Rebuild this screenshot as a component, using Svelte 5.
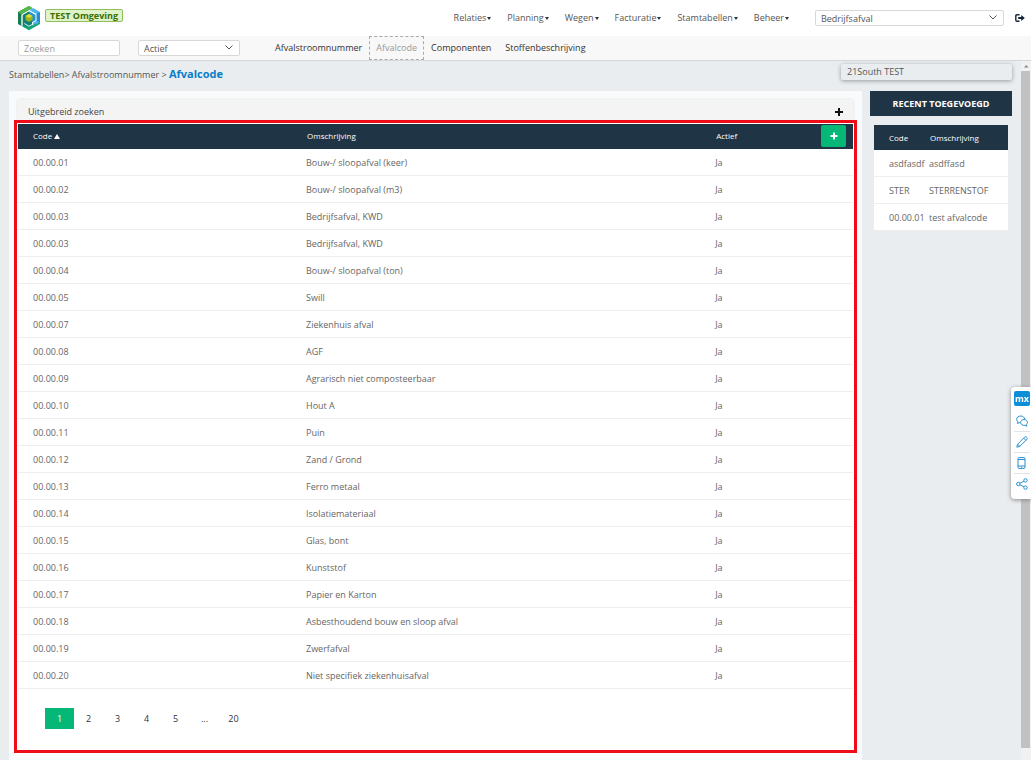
<script>
  const menu = ['Relaties', 'Planning', 'Wegen', 'Facturatie', 'Stamtabellen', 'Beheer'];
  const tabs = ['Afvalstroomnummer', 'Afvalcode', 'Componenten', 'Stoffenbeschrijving'];
  const rows = [
    ['00.00.01', 'Bouw-/ sloopafval (keer)'],
    ['00.00.02', 'Bouw-/ sloopafval (m3)'],
    ['00.00.03', 'Bedrijfsafval, KWD'],
    ['00.00.03', 'Bedrijfsafval, KWD'],
    ['00.00.04', 'Bouw-/ sloopafval (ton)'],
    ['00.00.05', 'Swill'],
    ['00.00.07', 'Ziekenhuis afval'],
    ['00.00.08', 'AGF'],
    ['00.00.09', 'Agrarisch niet composteerbaar'],
    ['00.00.10', 'Hout A'],
    ['00.00.11', 'Puin'],
    ['00.00.12', 'Zand / Grond'],
    ['00.00.13', 'Ferro metaal'],
    ['00.00.14', 'Isolatiemateriaal'],
    ['00.00.15', 'Glas, bont'],
    ['00.00.16', 'Kunststof'],
    ['00.00.17', 'Papier en Karton'],
    ['00.00.18', 'Asbesthoudend bouw en sloop afval'],
    ['00.00.19', 'Zwerfafval'],
    ['00.00.20', 'Niet specifiek ziekenhuisafval']
  ];
  const recent = [
    ['asdfasdf', 'asdffasd'],
    ['STER', 'STERRENSTOF'],
    ['00.00.01', 'test afvalcode']
  ];
  const pages = ['1', '2', '3', '4', '5', '...', '20'];
  let page = $state('1');
</script>

<div class="page">
  <header class="top">
    <svg class="logo" viewBox="0 0 24 26" aria-hidden="true">
      <path d="M12 1 1 7v12l3.500 2V9.500L15 3.200z" fill="#167c50" />
      <path d="M12 1 1 7l3.500 2.300L15.500 3z" fill="#55b949" />
      <path d="M12.500 5.200 16 3l7 4v11l-7 4v-4.300l3.500-2V9z" fill="#4db4ee" />
      <path d="M19.500 9 23 7v11l-3.500-2.300z" fill="#258bd2" />
      <path d="M5.500 10 12 6.200 18.500 10v5l-3.500 2v5.500L12 24l-6.500-3z" fill="#0f7f78" />
      <path d="m12 6.200 6.500 3.800v5L15 17v-5.500L12 9.500z" fill="#2196d4" />
      <path d="m4.500 21 7.500 4.200L23 19v-1.500l-11 4z" fill="#12a376" />
      <path d="M7.200 18.500 12 21.200l4-2.200" fill="none" stroke="#dff3ee" />
      <path d="M5 20.500V9.800L12 5.700l7 4v5.800" fill="none" stroke="#fff" stroke-width=".7" />
      <path d="M8.500 11 12 9l3.500 2v4L12 17l-3.500-2z" fill="#9db31c" />
      <path d="m8.500 11 3.500-2 3.500 2-3.500 2z" fill="#e0dc35" />
    </svg>
    <span class="env">TEST Omgeving</span>
    <nav class="menu" aria-label="Hoofdmenu">
      {#each menu as item}
        <button type="button">{item}<i class="caret"></i></button>
      {/each}
    </nav>
    <div class="pick wide">
      <select aria-label="Afdeling"><option>Bedrijfsafval</option></select>
      <svg viewBox="0 0 8 5" aria-hidden="true"><path d="m.5.5 3.500 3.500L7.500.5" /></svg>
    </div>
    <button type="button" class="logout" aria-label="Uitloggen">
      <svg viewBox="0 0 10 8" aria-hidden="true">
        <path d="M4.500.8H2Q.8.800.8 2v4Q.8 7.200 2 7.200h2.500" fill="none" stroke="#12263b" stroke-width="1.400" />
        <path d="M3.200 3h3V1L9.800 4 6.200 7V5h-3z" fill="#12263b" />
      </svg>
    </button>
  </header>

  <div class="sub">
    <input class="search" type="text" placeholder="Zoeken" aria-label="Zoeken" />
    <div class="pick">
      <select aria-label="Status"><option>Actief</option></select>
      <svg viewBox="0 0 8 5" aria-hidden="true"><path d="m.5.5 3.500 3.500L7.500.5" /></svg>
    </div>
    <nav class="tabs" aria-label="Stamtabellen">
      {#each tabs as tab}
        <a href="#{tab}" class:active={tab === 'Afvalcode'}>{tab}</a>
      {/each}
    </nav>
  </div>

  <div class="body">
    <div class="content">
      <div class="crumbs">
        <a href="#stam">Stamtabellen</a>&gt; <a href="#nummer">Afvalstroomnummer</a> &gt; <strong>Afvalcode</strong>
      </div>
      <div class="columns">
        <main class="panel">
          <button type="button" class="expand">
            <span>Uitgebreid zoeken</span>
            <svg viewBox="0 0 8 8" aria-hidden="true"><path d="M4 0v8M0 4h8" stroke="#111" stroke-width="2" /></svg>
          </button>
          <section class="grid">
            <table class="codes">
              <thead>
                <tr>
                  <th class="c1">Code<i class="sort"></i></th>
                  <th class="c2">Omschrijving</th>
                  <th>
                    <div class="last">
                      Actief
                      <button type="button" class="add" aria-label="Toevoegen">
                        <svg viewBox="0 0 8 8" aria-hidden="true"><path d="M4 .5v7M.5 4h7" stroke="#fff" stroke-width="2" /></svg>
                      </button>
                    </div>
                  </th>
                </tr>
              </thead>
              <tbody>
                {#each rows as [code, name]}
                  <tr><td>{code}</td><td>{name}</td><td>Ja</td></tr>
                {/each}
              </tbody>
            </table>
            <nav class="pages" aria-label="Pagina's">
              {#each pages as p}
                <button type="button" class:current={p === page} onclick={() => (page = p)}>{p}</button>
              {/each}
            </nav>
          </section>
        </main>
        <aside class="side">
          <h2>RECENT TOEGEVOEGD</h2>
          <table>
            <thead><tr><th class="r1">Code</th><th>Omschrijving</th></tr></thead>
            <tbody>
              {#each recent as [code, name]}
                <tr><td>{code}</td><td>{name}</td></tr>
              {/each}
            </tbody>
          </table>
        </aside>
      </div>
      <div class="hint">21South TEST</div>
    </div>
    <div class="track">
      <svg viewBox="0 0 10 10" aria-hidden="true"><path d="M3 6.500h4.500L5.200 4z" fill="#888" /></svg>
      <div class="thumb"></div>
    </div>
  </div>

  <div class="tools">
    <button type="button" class="mx">mx</button>
    <button type="button" aria-label="Feedback">
      <svg viewBox="0 0 12 12"><path d="M8.800 4.500C8.800 2.500 7 1 4.700 1S.7 2.500.7 4.400c0 1 .5 1.900 1.300 2.500L1.500 8.500l2-.9 1.200.2" /><path d="M8 4.500c2 0 3.400 1.300 3.400 2.900 0 .9-.4 1.600-1 2.100l.5 1.700-2-.9C6.500 10.700 4.700 9.300 4.700 7.500S6.200 4.500 8 4.500z" /></svg>
    </button>
    <button type="button" aria-label="Bewerken">
      <svg viewBox="0 0 12 12"><path d="m.8 11.200.8-3L8.800 1q.8-.7 1.600 0l.6.600q.7.800 0 1.600L3.800 10.400zM7.700 2.100l2.200 2.200M1.600 8.200l2.200 2.200" /></svg>
    </button>
    <button type="button" aria-label="Mobiele weergave">
      <svg viewBox="0 0 12 12"><rect x="2" y=".6" width="7" height="10.800" rx="1" /><path d="M2 2.500h7M2 9h7M5 10.300h1" /></svg>
    </button>
    <button type="button" aria-label="Delen">
      <svg viewBox="0 0 12 12"><circle cx="2.300" cy="6" r="1.700" /><circle cx="9.500" cy="2.400" r="1.700" /><circle cx="9.500" cy="9.600" r="1.700" /><path d="m3.900 5.200 4-2M3.900 6.800l4 2" /></svg>
    </button>
  </div>
</div>

<style>
  :global(body) { background: #e9edf0; }
  .page, .page button, .page input, .page select {
    font-family: 'Open Sans', 'Noto Sans', sans-serif;
    font-size: 9px;
    color: #555;
  }
  .page * { box-sizing: border-box; }
  .page { display: flex; flex-direction: column; min-height: 100vh; line-height: 12px; }
  button { border: 0; padding: 0; background: none; line-height: 12px; cursor: pointer; }
  a { color: inherit; text-decoration: none; }
  svg { display: block; }

  .top { display: flex; align-items: center; height: 36px; padding: 0 6px 0 17px; background: #fff; }
  .logo { width: 24px; height: 26px; }
  .env {
    align-self: flex-start; margin: 9px 0 0 4px; padding: 0 4px; border: 1px solid #8fbf5c; border-radius: 2px;
    background: #e0f3c8; color: #3c6e00; font-weight: 700; line-height: 11px;
  }
  .menu { display: flex; gap: 16px; margin: 0 26px 0 auto; }
  .page .menu button { display: flex; align-items: center; gap: 1px; }
  .caret { border: 2px solid transparent; border-top: 3px solid #333; border-bottom: 0; }
  .pick { position: relative; width: 102px; }
  .pick.wide { width: 189px; }
  .page .pick select, .page .search {
    display: block; width: 100%; height: 16px; padding: 0 5px; border: 1px solid #d7d7d7; border-radius: 2px;
    background: #fff; appearance: none;
  }
  .pick svg {
    position: absolute; right: 7px; top: 5px; width: 8px; height: 5px; fill: none; stroke: #555; pointer-events: none;
  }
  .logout { width: 10px; margin-left: 11px; }
  .logout svg { width: 10px; height: 8px; }

  .sub {
    display: flex; align-items: center; gap: 18px; height: 25px; padding: 0 18px;
    background: #f8f8f9; border-bottom: 1px solid #d5d7d9;
  }
  .page .sub .search { width: 102px; }
  .search::placeholder { color: #999; opacity: 1; }
  .tabs { display: flex; align-self: stretch; margin-left: 10px; }
  .tabs a { padding: 5px 6px; border: 1px dashed transparent; color: #333; }
  .tabs a.active { border-color: #aaa; color: #999; }

  .body { display: flex; flex: 1; }
  .content { position: relative; display: flex; flex-direction: column; flex: 1; padding: 0 9px; }
  .crumbs { height: 30px; line-height: 26px; }
  .crumbs strong { font-size: 11px; color: #0a7cc8; }
  .columns { display: flex; flex: 1; gap: 8px; }
  .panel { flex: 1; padding: 9px 5px 7px; background: #f8fafb; }
  .expand {
    display: flex; align-items: center; justify-content: space-between; width: calc(100% - 8px); height: 20px;
    margin: 0 4px; padding: 4px 10px 0; background: #f4f4f4; box-shadow: 0 0 3px #ddd;
  }
  .page .expand span { color: #444; }
  .expand svg { width: 8px; height: 8px; }
  .grid { position: relative; padding: 1px 1px 21px; border: 3px solid #ee0c18; background: #fff; }
  table { width: 100%; border-spacing: 0; border-collapse: separate; table-layout: fixed; background: #fff; }
  th { height: 25px; padding: 0 0 0 16px; background: #1f3445; color: #fff; font-weight: 500; font-size: 8px; text-align: left; }
  td { height: 27px; padding: 1px 0 0 15px; border-bottom: 1px solid #eee; color: #666; font-size: 9px; }
  .codes th { padding-bottom: 1px; }
  .codes .c1 { width: 273px; padding-left: 15px; }
  .c2 { width: 49%; }
  .sort { display: inline-block; margin-left: 2px; border: 3px solid transparent; border-top: 0; border-bottom: 5px solid #fff; }
  .last { display: flex; align-items: center; justify-content: space-between; padding-right: 7px; }
  .add { display: grid; place-items: center; width: 25px; height: 22px; border-radius: 2px; background: #05b877; }
  .add svg { width: 8px; height: 8px; }
  .pages { display: flex; margin: 19px 27px 0; }
  .pages button { width: 29px; height: 21px; color: #333; }
  .page .pages .current { background: #05b877; color: #fff; }

  .side { width: 142px; }
  h2 { margin: 0 0 9px; background: #1f3445; color: #fff; font-size: 9px; line-height: 25px; text-align: center; }
  .side table { width: calc(100% - 8px); margin: 0 4px; }
  .side .r1 { width: 40px; padding-left: 15px; }
  .side td { white-space: nowrap; }
  .hint {
    position: absolute; top: 3px; right: 9px; width: 171px; padding: 0 6px; border-radius: 2px;
    background: #e9edf0; line-height: 16px; box-shadow: 0 1px 4px #999;
  }
  .track { width: 10px; padding-bottom: 12px; background: #f1f1f1; display: flex; flex-direction: column; }
  .track svg { width: 10px; height: 10px; }
  .thumb { flex: 1; margin-right: 1px; background: #c1c1c1; }

  .tools {
    position: fixed; right: 0; top: 387px; width: 20px; padding: 4px 1px 5px 3px; border-radius: 4px 0 0 4px;
    background: #fff; box-shadow: 0 1px 4px #888;
  }
  .tools button { display: grid; place-items: center; width: 16px; height: 21px; border-top: 1px solid #e4e4e4; }
  .page .tools .mx { height: 15px; margin-bottom: 4px; border: 0; border-radius: 2px; background: #0d8ed8; color: #fff; font-weight: 700; }
  .tools .mx + button { border-top: 0; }
  .tools svg { width: 12px; height: 12px; fill: none; stroke: #2a8fcf; }
</style>
